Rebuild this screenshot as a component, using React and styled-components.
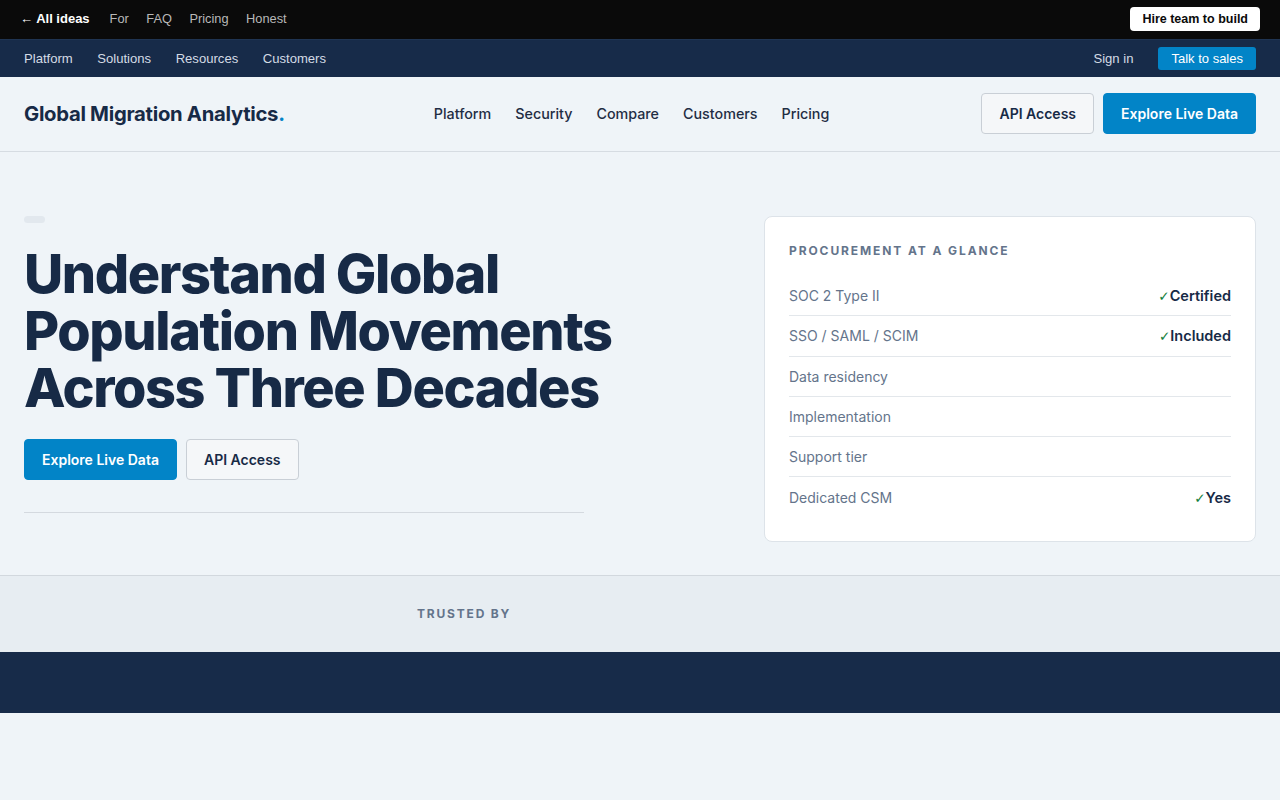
import React from "react";
import styled, { createGlobalStyle } from "styled-components";

const Global = createGlobalStyle`
  * { box-sizing: border-box; }
  html, body { margin: 0; padding: 0; background: #eff4f8; }
  body { font-family: Inter, "Liberation Sans", sans-serif; color: #172a46; }
`;

const TopBar = styled.div`
  height: 39px;
  background: #0a0a0a;
  display: flex;
  align-items: center;
  padding: 0 20px 2px 20px;
  font-family: "Liberation Sans", Arial, sans-serif;
  font-size: 13px;
`;
const Back = styled.a`
  color: #fff;
  font-weight: 700;
  margin-right: 20px;
  text-decoration: none;
`;
const TopLink = styled.a`
  color: #b8b8b8;
  margin-right: 17.5px;
  font-size: 12.8px;
  text-decoration: none;
`;
const Spacer = styled.div`
  flex: 1;
`;
const HireBtn = styled.button`
  background: #fff;
  color: #0a0a0a;
  border: none;
  border-radius: 4px;
  height: 24px;
  padding: 0 12px;
  margin-top: 1px;
  font-family: "Liberation Sans", Arial, sans-serif;
  font-weight: 700;
  font-size: 12.5px;
`;

const SubBar = styled.div`
  height: 38px;
  background: #172b49;
  border-top: 1px solid #1f3452;
  display: flex;
  align-items: center;
  padding: 0 24px;
  font-family: "Liberation Sans", Arial, sans-serif;
  font-size: 13.1px;
`;
const SubNav = styled.div`
  display: flex;
  gap: 24.5px;
`;
const SubLink = styled.a`
  color: #d4dbe5;
  text-decoration: none;
`;
const SalesBtn = styled.button`
  background: #0284c7;
  color: #fff;
  border: none;
  border-radius: 3px;
  height: 23px;
  padding: 0 13px;
  font-family: "Liberation Sans", Arial, sans-serif;
  font-size: 13px;
  margin-left: 25px;
`;

const Header = styled.header`
  height: 75px;
  border-bottom: 1px solid #d6dce2;
  display: flex;
  justify-content: space-between;
  align-items: center;
  padding: 0 24px 2px;
`;
const Logo = styled.div`
  font-size: 20.3px;
  font-weight: 700;
  letter-spacing: -0.3px;
  color: #172a46;
  span { color: #0284c7; }
`;
const Nav = styled.nav`
  display: flex;
  gap: 24px;
  margin-right: 3px;
`;
const NavLink = styled.a`
  font-size: 14.3px;
  font-weight: 500;
  color: #1f2d44;
  text-decoration: none;
`;
const Actions = styled.div`
  display: flex;
  gap: 9px;
`;
const Button = styled.button`
  height: 41px;
  padding: 0 17px;
  border-radius: 4px;
  font-family: Inter, sans-serif;
  font-size: 14px;
  font-weight: 600;
  border: 1px solid ${p => (p.$primary ? "#0284c7" : "#c9cfd6")};
  background: ${p => (p.$primary ? "#0284c7" : "#f5f7f9")};
  color: ${p => (p.$primary ? "#fff" : "#172a46")};
`;

const Hero = styled.section`
  display: grid;
  grid-template-columns: 1fr 492px;
  gap: 48px;
  padding: 64px 24px 33px;
  border-bottom: 1px solid #d2d8de;
`;
const Left = styled.div`
  display: flex;
  flex-direction: column;
  align-items: flex-start;
`;
const Pill = styled.div`
  width: 21px;
  height: 7px;
  border-radius: 4px;
  background: #e2e8ee;
`;
const H1 = styled.h1`
  margin: 22px 0 0;
  font-size: 54px;
  line-height: 57px;
  font-weight: 800;
  letter-spacing: -1.4px;
  color: #172a46;
  max-width: 640px;
`;
const HeroActions = styled.div`
  display: flex;
  gap: 9px;
  margin-top: 23px;
`;
const Divider = styled.hr`
  width: 560px;
  border: none;
  border-top: 1px solid #d4d9df;
  margin: 32px 0 0;
`;

const Card = styled.div`
  background: #fff;
  border: 1px solid #dde3e9;
  border-radius: 8px;
  padding: 26px 24px 23px;
  align-self: start;
`;
const CardLabel = styled.div`
  font-size: 12px;
  line-height: 15px;
  font-weight: 700;
  letter-spacing: 1.9px;
  color: #64748b;
  text-transform: uppercase;
  margin-bottom: 18px;
`;
const Row = styled.div`
  display: flex;
  justify-content: space-between;
  align-items: center;
  height: 40.3px;
  border-bottom: 1px solid #e3e7eb;
  font-size: 14px;
  &:last-child { border-bottom: none; }
`;
const RowLabel = styled.span`
  color: #64748b;
`;
const RowValue = styled.span`
  display: flex;
  align-items: baseline;
  font-weight: 600;
  font-size: 14.5px;
  color: #172a46;
`;
const Check = styled.span`
  color: #15803d;
  font-family: "DejaVu Sans", sans-serif;
  font-weight: 700;
  font-size: 13.5px;
`;

const Trusted = styled.section`
  height: 76px;
  background: #e7edf2;
  display: flex;
  align-items: center;
  padding-left: 417px;
`;
const TrustedLabel = styled.div`
  font-size: 12px;
  font-weight: 700;
  letter-spacing: 1.8px;
  color: #64748b;
`;
const Band = styled.div`
  height: 61px;
  background: #172b49;
`;

const rows = [
  ["SOC 2 Type II", "Certified"],
  ["SSO / SAML / SCIM", "Included"],
  ["Data residency", null],
  ["Implementation", null],
  ["Support tier", null],
  ["Dedicated CSM", "Yes"],
];

export default function App() {
  return (
    <>
      <Global />
      <TopBar>
        <Back>← All ideas</Back>
        <TopLink>For</TopLink>
        <TopLink>FAQ</TopLink>
        <TopLink>Pricing</TopLink>
        <TopLink>Honest</TopLink>
        <Spacer />
        <HireBtn>Hire team to build</HireBtn>
      </TopBar>
      <SubBar>
        <SubNav>
          <SubLink>Platform</SubLink>
          <SubLink>Solutions</SubLink>
          <SubLink>Resources</SubLink>
          <SubLink>Customers</SubLink>
        </SubNav>
        <Spacer />
        <SubLink>Sign in</SubLink>
        <SalesBtn>Talk to sales</SalesBtn>
      </SubBar>
      <Header>
        <Logo>
          Global Migration Analytics<span>.</span>
        </Logo>
        <Nav>
          <NavLink>Platform</NavLink>
          <NavLink>Security</NavLink>
          <NavLink>Compare</NavLink>
          <NavLink>Customers</NavLink>
          <NavLink>Pricing</NavLink>
        </Nav>
        <Actions>
          <Button>API Access</Button>
          <Button $primary>Explore Live Data</Button>
        </Actions>
      </Header>
      <Hero>
        <Left>
          <Pill />
          <H1>Understand Global Population Movements Across Three Decades</H1>
          <HeroActions>
            <Button $primary>Explore Live Data</Button>
            <Button>API Access</Button>
          </HeroActions>
          <Divider />
        </Left>
        <Card>
          <CardLabel>Procurement at a glance</CardLabel>
          {rows.map(([l, v]) => (
            <Row key={l}>
              <RowLabel>{l}</RowLabel>
              {v && (
                <RowValue>
                  <Check>✓</Check>
                  {v}
                </RowValue>
              )}
            </Row>
          ))}
        </Card>
      </Hero>
      <Trusted>
        <TrustedLabel>TRUSTED BY</TrustedLabel>
      </Trusted>
      <Band />
    </>
  );
}
